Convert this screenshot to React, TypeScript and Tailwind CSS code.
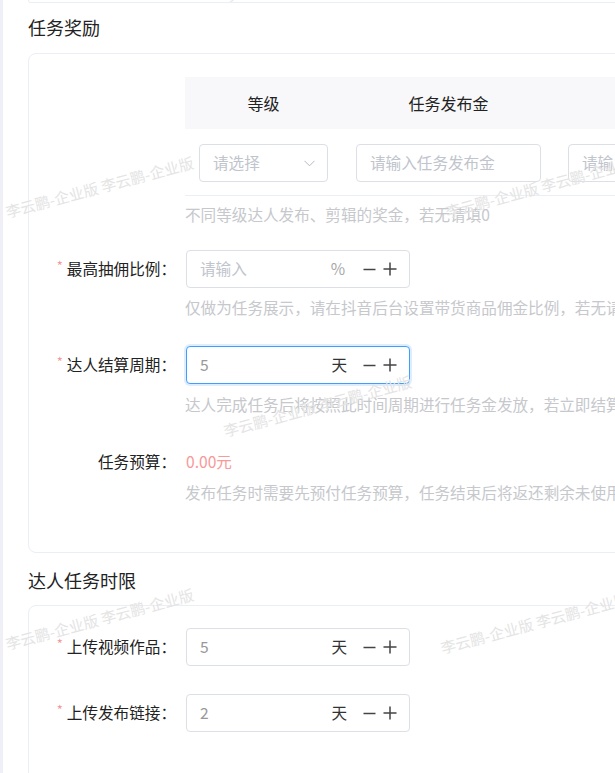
import React from 'react';

const Minus = () => (
  <svg width="13" height="13" viewBox="0 0 13 13" className="block">
    <path d="M0.5 6.5h12" stroke="#444" strokeWidth="1.5" />
  </svg>
);

const Plus = () => (
  <svg width="14" height="14" viewBox="0 0 14 14" className="block">
    <path d="M0.5 7h13M7 0.5v13" stroke="#444" strokeWidth="1.5" />
  </svg>
);

const Chevron = () => (
  <svg width="11" height="7" viewBox="0 0 11 7" className="block">
    <path d="M0.5 0.8l5 5 5-5" fill="none" stroke="#b4b8c0" strokeWidth="1" />
  </svg>
);

interface NumInputProps {
  value?: string;
  placeholder?: string;
  unit: string;
  unitMuted?: boolean;
  focused?: boolean;
}

const NumInput: React.FC<NumInputProps> = ({ value, placeholder, unit, unitMuted, focused }) => (
  <div
    className={`flex h-[38px] w-[224px] items-center rounded-[4px] border bg-white pl-[13px] pr-[12px] ${
      focused ? 'border-[#409eff] shadow-[0_0_0_2px_rgba(64,158,255,0.18)]' : 'border-[#dcdfe6]'
    }`}
  >
    <span className={`flex-1 ${value ? 'text-[#999]' : 'text-[#c0c4cc]'}`}>{value || placeholder}</span>
    <span className={unitMuted ? 'text-[#a8a8a8]' : 'text-[#333]'}>{unit}</span>
    <span className={unitMuted ? 'ml-[18px]' : 'ml-[16px]'}><Minus /></span>
    <span className="ml-[7px]"><Plus /></span>
  </div>
);

const Label: React.FC<{ text: string; required?: boolean }> = ({ text, required }) => (
  <div className="flex w-[157px] shrink-0 items-center justify-end pr-[10px] text-[#222]">
    {required && <span className="mr-[4px] -mt-[6px] text-[13px] text-[#f39a9a]">*</span>}
    <span>{text}：</span>
  </div>
);

const Helper: React.FC<{ text: string; className?: string }> = ({ text, className }) => (
  <p className={`ml-[156px] whitespace-nowrap leading-[22px] text-[#c6c8cc] ${className ?? ''}`}>{text}</p>
);

const Watermark: React.FC<{ className: string }> = ({ className }) => (
  <span
    className={`pointer-events-none absolute origin-bottom-left -rotate-[15deg] whitespace-nowrap text-[15px] leading-[16px] text-[#e4e4e4] ${className}`}
  >
    李云鹏-企业版 李云鹏-企业版
  </span>
);

export default function App() {
  return (
    <div className="relative h-[773px] w-[615px] overflow-hidden border-l-[3px] border-[#eef0f6] bg-white pl-[25px] font-['Noto_Sans_CJK_SC','Noto_Sans',sans-serif] text-[15.6px] text-[#333]">
      {/* tail of the previous card */}
      <div className="h-[3px] w-[900px] rounded-b-[8px] border-x border-b border-[#ebeef5]" />

      <h2 className="mt-[11px] h-[27px] text-[18px] leading-[27px] text-[#222]">任务奖励</h2>

      <section className="mt-[12px] w-[900px] rounded-[8px] border border-[#ebeef5] pb-[49px] pt-[23px]">
        <div className="ml-[156px]">
          <div className="flex h-[52px] items-center bg-[#f8f8fa] text-[16px] text-[#222]">
            <span className="w-[157px] text-center">等级</span>
            <span className="w-[213px] text-center">任务发布金</span>
            <span className="w-[213px] text-center">任务剪辑金</span>
          </div>
          <div className="flex h-[67px] items-start border-b border-[#ebeef5] pt-[15px]">
            <div className="ml-[14px] flex h-[38px] w-[129px] items-center justify-between rounded-[4px] border border-[#dcdfe6] pl-[13px] pr-[12px] text-[#c0c4cc]">
              <span>请选择</span>
              <Chevron />
            </div>
            <div className="ml-[28px] flex h-[38px] w-[185px] items-center rounded-[4px] border border-[#dcdfe6] pl-[13px] text-[#c0c4cc]">
              请输入任务发布金
            </div>
            <div className="ml-[27px] flex h-[38px] w-[185px] items-center rounded-[4px] border border-[#dcdfe6] pl-[13px] text-[#c0c4cc]">
              请输入任务剪辑金
            </div>
          </div>
        </div>
        <Helper text="不同等级达人发布、剪辑的奖金，若无请填0" className="mt-[7px]" />

        <div className="mt-[25px] flex h-[38px] items-center">
          <Label text="最高抽佣比例" required />
          <NumInput placeholder="请输入" unit="%" unitMuted />
        </div>
        <Helper text="仅做为任务展示，请在抖音后台设置带货商品佣金比例，若无请填0" className="mt-[8px]" />

        <div className="mt-[28px] flex h-[38px] items-center">
          <Label text="达人结算周期" required />
          <NumInput value="5" unit="天" focused />
        </div>
        <Helper text="达人完成任务后将按照此时间周期进行任务金发放，若立即结算请填0" className="mt-[9px]" />

        <div className="mt-[28px] flex h-[38px] items-center">
          <Label text="任务预算" />
          <span className="text-[#f79a9a]">0.00元</span>
        </div>
        <Helper text="发布任务时需要先预付任务预算，任务结束后将返还剩余未使用的预算" />
      </section>

      <h2 className="mt-[14px] h-[27px] text-[18px] leading-[27px] text-[#222]">达人任务时限</h2>

      <section className="mt-[11px] h-[300px] w-[900px] rounded-[8px] border border-[#ebeef5] pt-[22px]">
        <div className="flex h-[38px] items-center">
          <Label text="上传视频作品" required />
          <NumInput value="5" unit="天" />
        </div>
        <div className="mt-[28px] flex h-[38px] items-center">
          <Label text="上传发布链接" required />
          <NumInput value="2" unit="天" />
        </div>
      </section>

      <Watermark className="left-[223px] top-[-12px]" />
      <Watermark className="left-[5px] top-[204px]" />
      <Watermark className="left-[445px] top-[204px]" />
      <Watermark className="left-[223px] top-[423px]" />
      <Watermark className="left-[5px] top-[636px]" />
      <Watermark className="left-[440px] top-[640px]" />
    </div>
  );
}
